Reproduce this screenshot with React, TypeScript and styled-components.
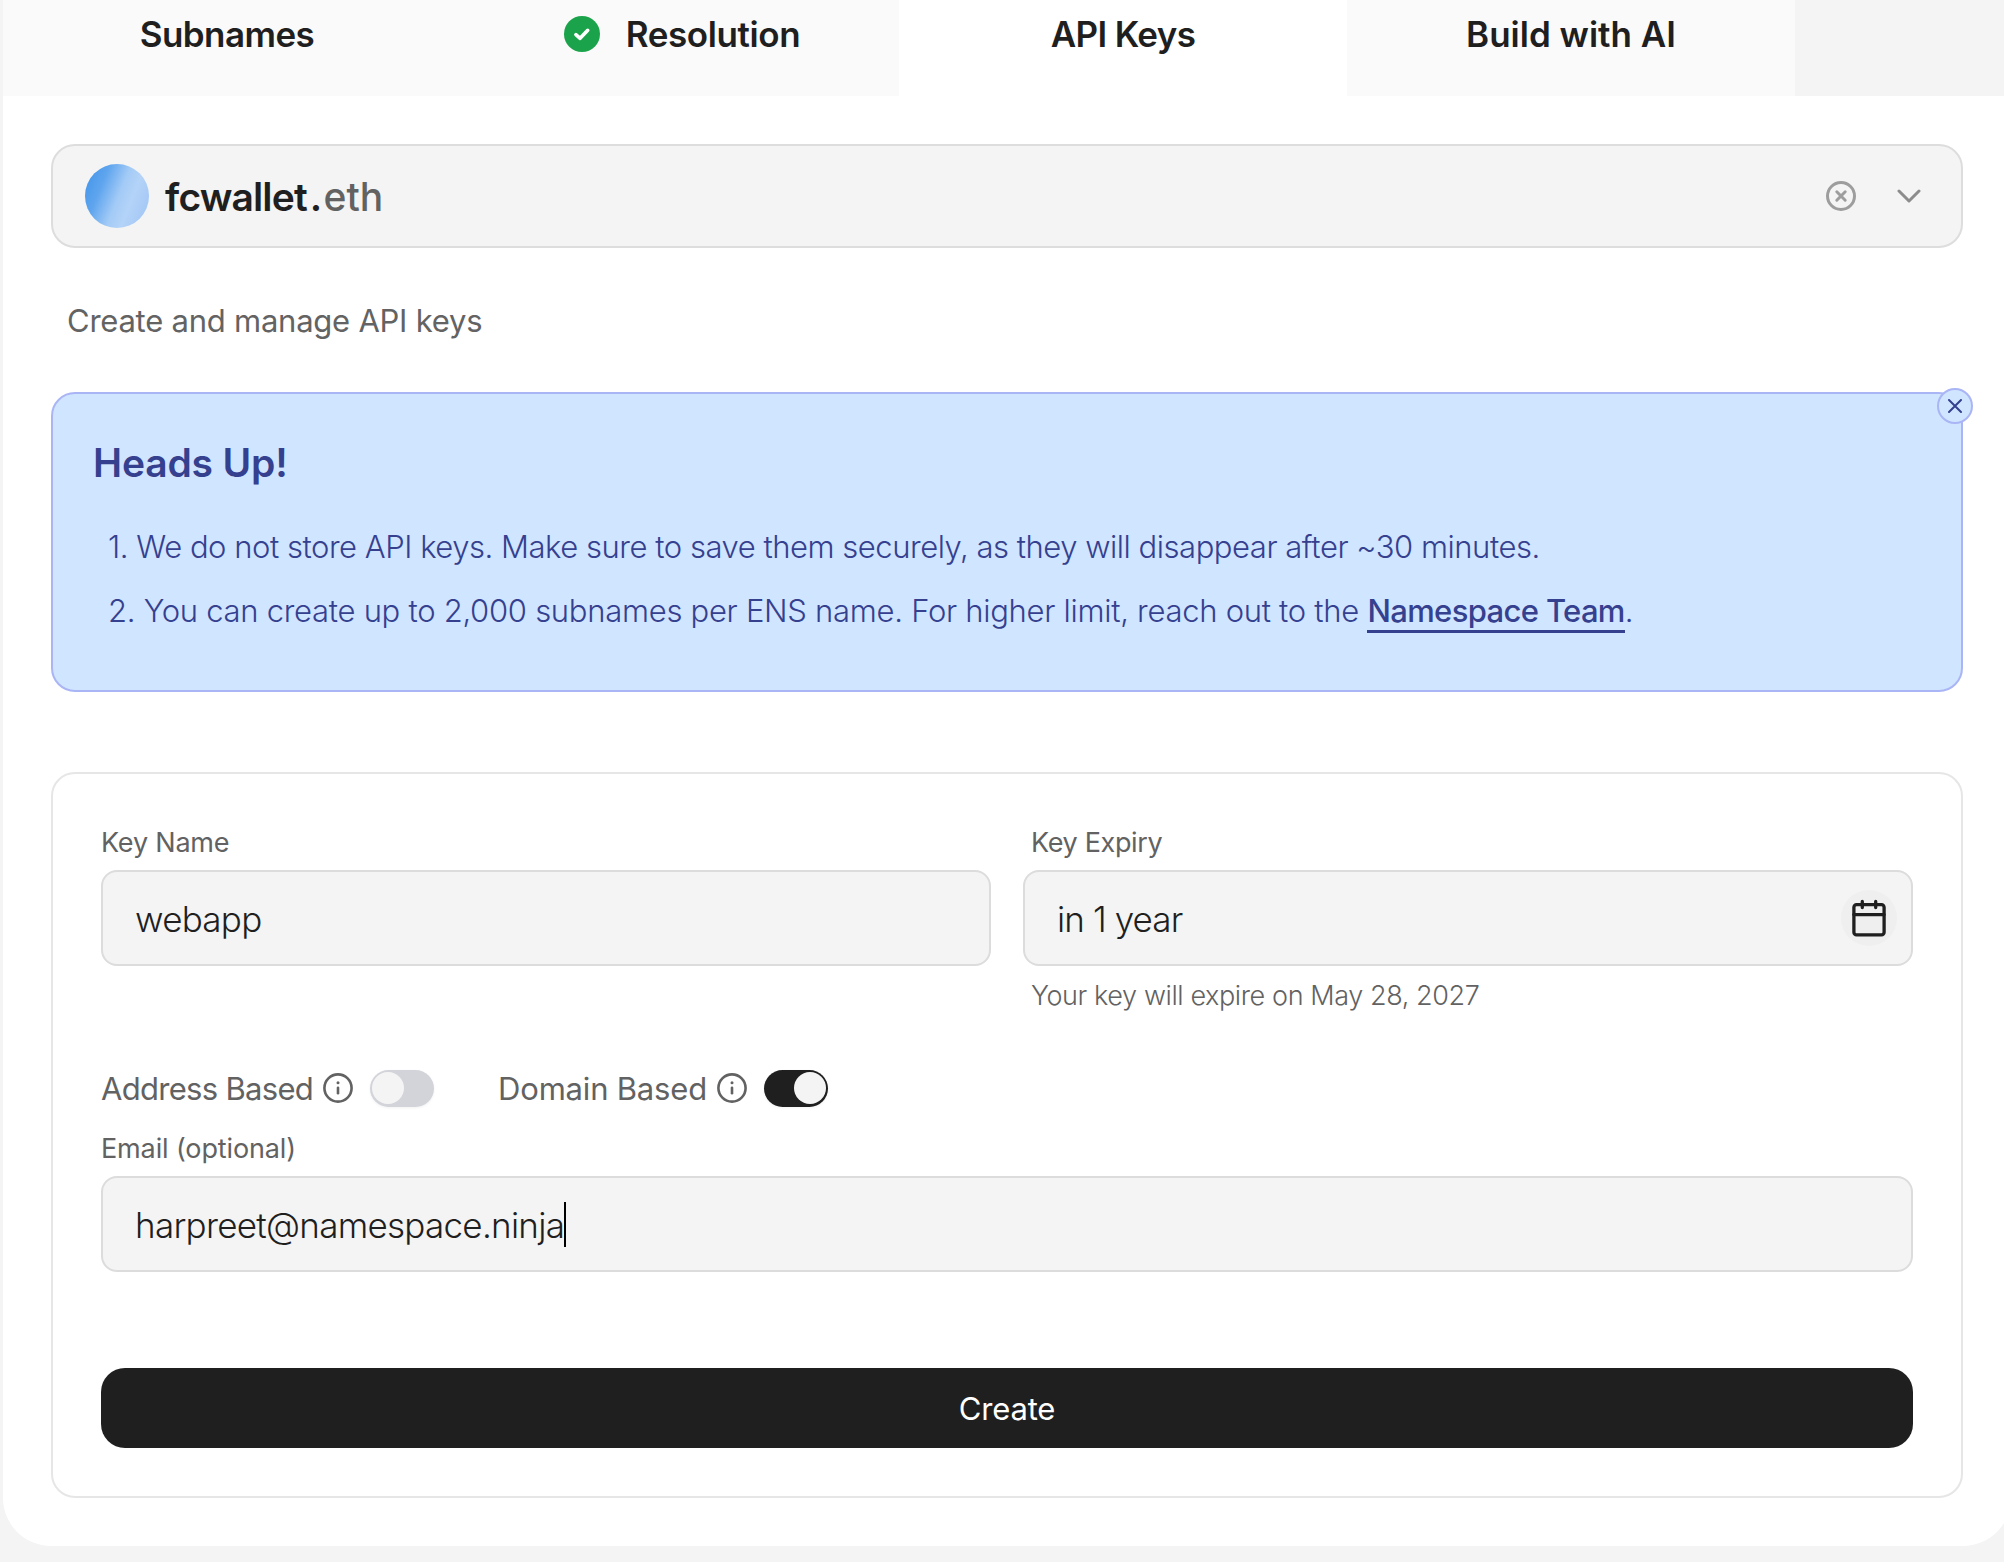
import React from "react";
import styled, { createGlobalStyle } from "styled-components";

const GlobalStyle = createGlobalStyle`
  *, *::before, *::after { box-sizing: border-box; }
  html, body { margin: 0; padding: 0; }
  body {
    background: #f4f4f4;
    color: #1f1f1f;
    font-family: Inter, "Liberation Sans", sans-serif;
    overflow: hidden;
  }
`;

const Page = styled.div`
  width: 2004px;
  height: 1562px;
  padding-left: 3px;
  overflow: hidden;
  background: #f4f4f4;
`;

const Panel = styled.main`
  width: 2008px;
  height: 1546px;
  overflow: hidden;
  background: #fff;
  border-radius: 0 0 48px 48px;
`;

const Tabs = styled.nav`
  display: flex;
  height: 96px;
  background: #f4f4f4;
`;

const Tab = styled.div<{ $active?: boolean; $shift?: number }>`
  display: flex;
  align-items: center;
  justify-content: center;
  gap: 26px;
  width: 448px;
  padding: 0 0 28px ${(p) => p.$shift ?? 0}px;
  background: ${(p) => (p.$active ? "#fff" : "#fafafa")};
`;

const TabLabel = styled.span<{ $track: number }>`
  font-size: 35px;
  font-weight: 600;
  line-height: 46px;
  letter-spacing: ${(p) => p.$track}px;
  white-space: nowrap;
`;

const Content = styled.div`
  display: flex;
  flex-direction: column;
  width: 1912px;
  margin: 48px 0 0 48px;
`;

const NameSelector = styled.div`
  display: flex;
  align-items: center;
  height: 104px;
  padding: 0 40px 0 32px;
  border: 2px solid #dddddd;
  border-radius: 24px;
  background: #f4f4f4;
`;

const Avatar = styled.div`
  width: 64px;
  height: 64px;
  margin-right: 16px;
  border-radius: 50%;
  background: linear-gradient(112deg, #4596ea 6%, #5fa5ee 28%, #a3cbf6 52%, #b4d3f8 68%, #9cc2f4 100%);
`;

const Name = styled.div`
  display: flex;
  flex: 1;
  padding-top: 2px;
  font-size: 39px;
  font-weight: 600;
  line-height: 52px;
  letter-spacing: -0.85px;
`;

const NameDot = styled.span`
  margin-left: 3px;
`;

const NameSuffix = styled.span`
  margin-left: 2px;
  color: #626262;
  font-weight: 500;
  letter-spacing: 0.1px;
`;

const SelectorActions = styled.div`
  display: flex;
  align-items: center;
  gap: 41px;
`;

const Subtitle = styled.p`
  margin: 0;
  padding: 1px 0 0 16px;
  color: #636363;
  font-size: 31px;
  line-height: 143px;
  letter-spacing: -0.24px;
`;

const Notice = styled.section`
  position: relative;
  height: 300px;
  padding: 42px 40px;
  border: 2px solid #aab5f5;
  border-radius: 24px;
  background: #d0e5ff;
  color: #35408f;
`;

const NoticeTitle = styled.h2`
  margin: 0 0 25px;
  font-size: 39px;
  font-weight: 600;
  line-height: 54px;
  letter-spacing: -0.16px;
`;

const NoticeLine = styled.p<{ $track: number }>`
  margin: 0;
  padding-left: 15px;
  font-size: 31px;
  font-weight: 300;
  line-height: 64px;
  letter-spacing: ${(p) => p.$track}px;
  white-space: nowrap;
`;

const NoticeLink = styled.a`
  padding-bottom: 1px;
  border-bottom: 3px solid #35408f;
  color: inherit;
  font-weight: 500;
  letter-spacing: -0.65px;
`;

const NoticeClose = styled.button`
  position: absolute;
  top: -6px;
  right: -12px;
  display: flex;
  align-items: center;
  justify-content: center;
  width: 36px;
  height: 36px;
  padding: 0;
  border: 2px solid #aab5f5;
  border-radius: 50%;
  background: #d0e5ff;
`;

const FormCard = styled.form`
  display: flex;
  flex-direction: column;
  height: 726px;
  margin-top: 80px;
  padding: 48px;
  border: 2px solid #e6e6e6;
  border-radius: 24px;
`;

const FieldRow = styled.div`
  display: grid;
  grid-template-columns: 1fr 1fr;
  gap: 32px;
`;

const Field = styled.div`
  display: flex;
  flex-direction: column;
`;

const Label = styled.label<{ $track: number; $indent?: number }>`
  margin-bottom: 6px;
  padding-left: ${(p) => p.$indent ?? 0}px;
  color: #626262;
  font-size: 27px;
  line-height: 42px;
  letter-spacing: ${(p) => p.$track}px;
`;

const InputBox = styled.div`
  display: flex;
  align-items: center;
  height: 96px;
  padding: 0 14px 0 32px;
  border: 2px solid #dcdcdc;
  border-radius: 16px;
  background: #f4f4f4;
`;

const InputText = styled.span<{ $track: number }>`
  padding-top: 2px;
  font-size: 35px;
  font-weight: 300;
  line-height: 46px;
  letter-spacing: ${(p) => p.$track}px;
  white-space: nowrap;
`;

const Caret = styled.span`
  width: 2px;
  height: 45px;
  background: #000;
`;

const CalendarButton = styled.span`
  display: flex;
  align-items: center;
  justify-content: center;
  width: 56px;
  height: 56px;
  margin-left: auto;
  border-radius: 50%;
  background: #efefef;
`;

const Helper = styled.p`
  margin: 10px 0 0;
  padding-left: 8px;
  color: #626262;
  font-size: 27px;
  font-weight: 300;
  line-height: 40px;
  letter-spacing: -0.4px;
`;

const ToggleRow = styled.div`
  display: flex;
  align-items: center;
  gap: 64px;
  height: 40px;
  margin: 52px 0 20px;
`;

const ToggleGroup = styled.div`
  display: flex;
  align-items: center;
`;

const ToggleLabel = styled.span<{ $track: number }>`
  margin-right: 10px;
  padding-top: 2px;
  color: #626262;
  font-size: 31px;
  line-height: 38px;
  letter-spacing: ${(p) => p.$track}px;
`;

const Switch = styled.span<{ $on?: boolean }>`
  display: flex;
  align-items: center;
  justify-content: ${(p) => (p.$on ? "flex-end" : "flex-start")};
  width: 64px;
  height: 37px;
  margin-left: 17px;
  padding: 0 2px;
  border-radius: 19px;
  background: ${(p) => (p.$on ? "#1f1f1f" : "#d2d4da")};
  box-shadow: 0 1px 3px rgba(0, 0, 0, 0.06);
`;

const Knob = styled.span`
  width: 32px;
  height: 32px;
  border-radius: 50%;
  background: #f4f4f4;
`;

const CreateButton = styled.button`
  height: 80px;
  margin-top: 96px;
  padding: 1px 0 0;
  border: 0;
  border-radius: 24px;
  background: #1f1f1f;
  color: #fff;
  font-family: inherit;
  font-size: 31px;
  font-weight: 400;
  letter-spacing: -0.2px;
`;

const CheckBadge = () => (
  <svg width="36" height="36" viewBox="0 0 36 36" fill="none">
    <circle cx="18" cy="18" r="18" fill="#1aa34a" />
    <path d="M11.9 18.6l4.2 3.7 7.6-8" stroke="#fff" strokeWidth="3.6" strokeLinecap="round" strokeLinejoin="round" />
  </svg>
);

const ClearIcon = () => (
  <svg width="30" height="30" viewBox="0 0 30 30" fill="none" stroke="#9d9d9d" strokeWidth="3" strokeLinecap="round">
    <circle cx="15" cy="15" r="13.5" />
    <path d="M10.8 10.8l8.4 8.4M19.2 10.8l-8.4 8.4" />
  </svg>
);

const ChevronIcon = () => (
  <svg width="24" height="14" viewBox="0 0 24 14" fill="none" stroke="#8c8c8c" strokeWidth="3" strokeLinecap="round" strokeLinejoin="round">
    <path d="M2 2l10 10L22 2" />
  </svg>
);

const CloseIcon = () => (
  <svg width="14" height="14" viewBox="0 0 14 14" fill="none" stroke="#35408f" strokeWidth="2" strokeLinecap="round">
    <path d="M1 1l12 12M13 1L1 13" />
  </svg>
);

const InfoIcon = () => (
  <svg width="30" height="30" viewBox="0 0 30 30" fill="none" stroke="#626262" strokeWidth="2.6" strokeLinecap="round">
    <circle cx="15" cy="15" r="13.6" />
    <path d="M15 14.8v5.4" />
    <circle cx="15" cy="9.8" r="1.5" fill="#626262" stroke="none" />
  </svg>
);

const CalendarIcon = () => (
  <svg width="34" height="38" viewBox="0 0 34 38" fill="none" stroke="#1f1f1f" strokeWidth="3.3" strokeLinecap="round">
    <rect x="1.9" y="5.6" width="30.2" height="30.2" rx="2.6" />
    <path d="M1.9 15.6h30.2M10.3 2.4v6.2M23.7 2.4v6.2" />
  </svg>
);

export default function App() {
  return (
    <>
      <GlobalStyle />
      <Page>
        <Panel>
          <Tabs>
            <Tab>
              <TabLabel $track={-0.55}>Subnames</TabLabel>
            </Tab>
            <Tab $shift={14}>
              <CheckBadge />
              <TabLabel $track={-0.38}>Resolution</TabLabel>
            </Tab>
            <Tab $active>
              <TabLabel $track={-0.65}>API Keys</TabLabel>
            </Tab>
            <Tab>
              <TabLabel $track={0}>Build with AI</TabLabel>
            </Tab>
          </Tabs>

          <Content>
            <NameSelector>
              <Avatar />
              <Name>
                fcwallet
                <NameDot>.</NameDot>
                <NameSuffix>eth</NameSuffix>
              </Name>
              <SelectorActions>
                <ClearIcon />
                <ChevronIcon />
              </SelectorActions>
            </NameSelector>

            <Subtitle>Create and manage API keys</Subtitle>

            <Notice>
              <NoticeTitle>Heads Up!</NoticeTitle>
              <NoticeLine $track={-0.47}>
                1. We do not store API keys. Make sure to save them securely, as they will disappear after ~30 minutes.
              </NoticeLine>
              <NoticeLine $track={-0.28}>
                2. You can create up to 2,000 subnames per ENS name. For higher limit, reach out to the{" "}
                <NoticeLink>Namespace Team</NoticeLink>.
              </NoticeLine>
              <NoticeClose type="button" aria-label="Dismiss">
                <CloseIcon />
              </NoticeClose>
            </Notice>

            <FormCard>
              <FieldRow>
                <Field>
                  <Label $track={-0.2}>Key Name</Label>
                  <InputBox>
                    <InputText $track={-0.75}>webapp</InputText>
                  </InputBox>
                </Field>
                <Field>
                  <Label $track={-0.35} $indent={8}>Key Expiry</Label>
                  <InputBox>
                    <InputText $track={-0.9}>in 1 year</InputText>
                    <CalendarButton>
                      <CalendarIcon />
                    </CalendarButton>
                  </InputBox>
                  <Helper>Your key will expire on May 28, 2027</Helper>
                </Field>
              </FieldRow>

              <ToggleRow>
                <ToggleGroup>
                  <ToggleLabel $track={-0.7}>Address Based</ToggleLabel>
                  <InfoIcon />
                  <Switch>
                    <Knob />
                  </Switch>
                </ToggleGroup>
                <ToggleGroup>
                  <ToggleLabel $track={-0.19}>Domain Based</ToggleLabel>
                  <InfoIcon />
                  <Switch $on>
                    <Knob />
                  </Switch>
                </ToggleGroup>
              </ToggleRow>

              <Field>
                <Label $track={-0.13}>Email (optional)</Label>
                <InputBox>
                  <InputText $track={-0.73}>harpreet@namespace.ninja</InputText>
                  <Caret />
                </InputBox>
              </Field>

              <CreateButton type="button">Create</CreateButton>
            </FormCard>
          </Content>
        </Panel>
      </Page>
    </>
  );
}
